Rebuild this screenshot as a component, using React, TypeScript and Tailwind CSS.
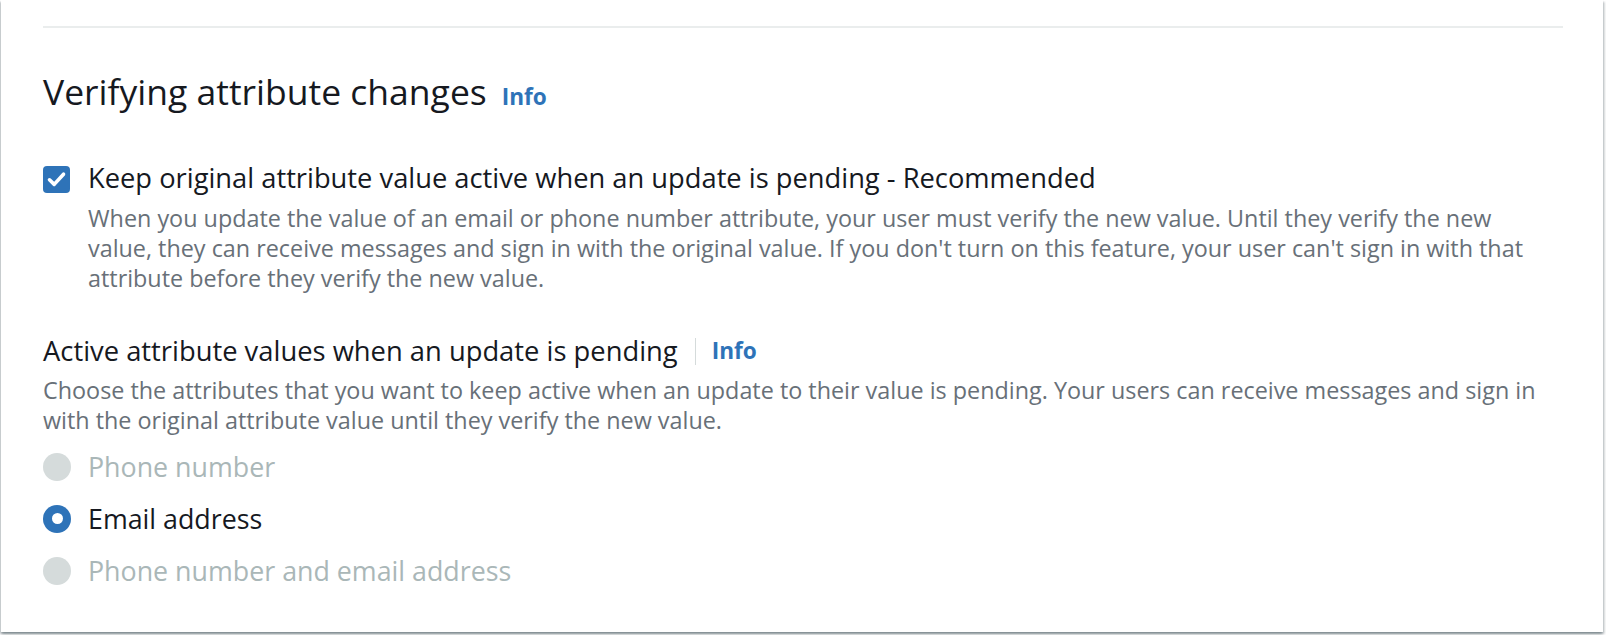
import React from "react";

function Radio({ label, state }: { label: string; state: "disabled" | "checked" }) {
  return (
    <div className="flex h-[51.7px] items-center">
      {state === "checked" ? (
        <span className="flex h-[28px] w-[28px] shrink-0 items-center justify-center rounded-full bg-[#2e73b8]">
          <span className="h-[11px] w-[11px] rounded-full bg-white" />
        </span>
      ) : (
        <span className="h-[28px] w-[28px] shrink-0 rounded-full bg-[#d5dbdb]" />
      )}
      <span
        className={
          "ml-[17px] text-[26.8px] leading-[36px] whitespace-nowrap " +
          (state === "checked" ? "text-[#16191f]" : "text-[#aab7b8]")
        }
      >
        {label}
      </span>
    </div>
  );
}

export default function App() {
  return (
    <div className="h-[635px] w-[1606px] overflow-hidden bg-white font-['Open_Sans',sans-serif]">
      <div className="ml-[1px] h-[632px] w-[1602px] bg-white pl-[42px] pr-[40px] pt-[26px] shadow-[0_2px_2px_0_rgba(0,28,36,0.3),2px_2px_2px_0_rgba(0,28,36,0.15),-2px_2px_2px_0_rgba(0,28,36,0.15)]">
        <div className="h-[2px] bg-[#eaeded]" />

        <div className="mt-[41px] flex items-baseline">
          <h2 className="text-[35.5px] leading-[44px] font-normal text-[#16191f] whitespace-nowrap">
            Verifying attribute changes
          </h2>
          <span className="ml-[15px] text-[22.6px] font-bold text-[#2e73b8]">Info</span>
        </div>

        <div className="mt-[46px] flex items-start">
          <span className="mt-[6.5px] flex h-[27px] w-[27px] shrink-0 items-center justify-center rounded-[4px] bg-[#2e73b8]">
            <svg width="27" height="27" viewBox="0 0 27 27" fill="none">
              <path d="M6.5 13.8 L11.2 18.4 L20.5 8.2" stroke="white" strokeWidth="3.6" strokeLinecap="round" strokeLinejoin="round" />
            </svg>
          </span>
          <div className="ml-[18px]">
            <div className="text-[27.3px] leading-[36px] text-[#16191f] whitespace-nowrap">
              Keep original attribute value active when an update is pending - Recommended
            </div>
            <div className="mt-[7.5px] text-[23.37px] leading-[30px] text-[#687078] whitespace-nowrap">
              <div>When you update the value of an email or phone number attribute, your user must verify the new value. Until they verify the new</div>
              <div>value, they can receive messages and sign in with the original value. If you don't turn on this feature, your user can't sign in with that</div>
              <div>attribute before they verify the new value.</div>
            </div>
          </div>
        </div>

        <div className="mt-[40px] flex items-center">
          <span className="text-[27.35px] leading-[36px] text-[#16191f] whitespace-nowrap">
            Active attribute values when an update is pending
          </span>
          <span className="ml-[17px] h-[27px] w-[1px] bg-[#d5dbdb]" />
          <span className="ml-[16px] text-[22.6px] font-bold leading-[36px] text-[#2e73b8]">Info</span>
        </div>
        <div className="mt-[5.5px] text-[23.37px] leading-[30px] text-[#687078] whitespace-nowrap">
          <div>Choose the attributes that you want to keep active when an update to their value is pending. Your users can receive messages and sign in</div>
          <div>with the original attribute value until they verify the new value.</div>
        </div>

        <div className="mt-[6.5px] flex flex-col">
          <Radio label="Phone number" state="disabled" />
          <Radio label="Email address" state="checked" />
          <Radio label="Phone number and email address" state="disabled" />
        </div>
      </div>
    </div>
  );
}
